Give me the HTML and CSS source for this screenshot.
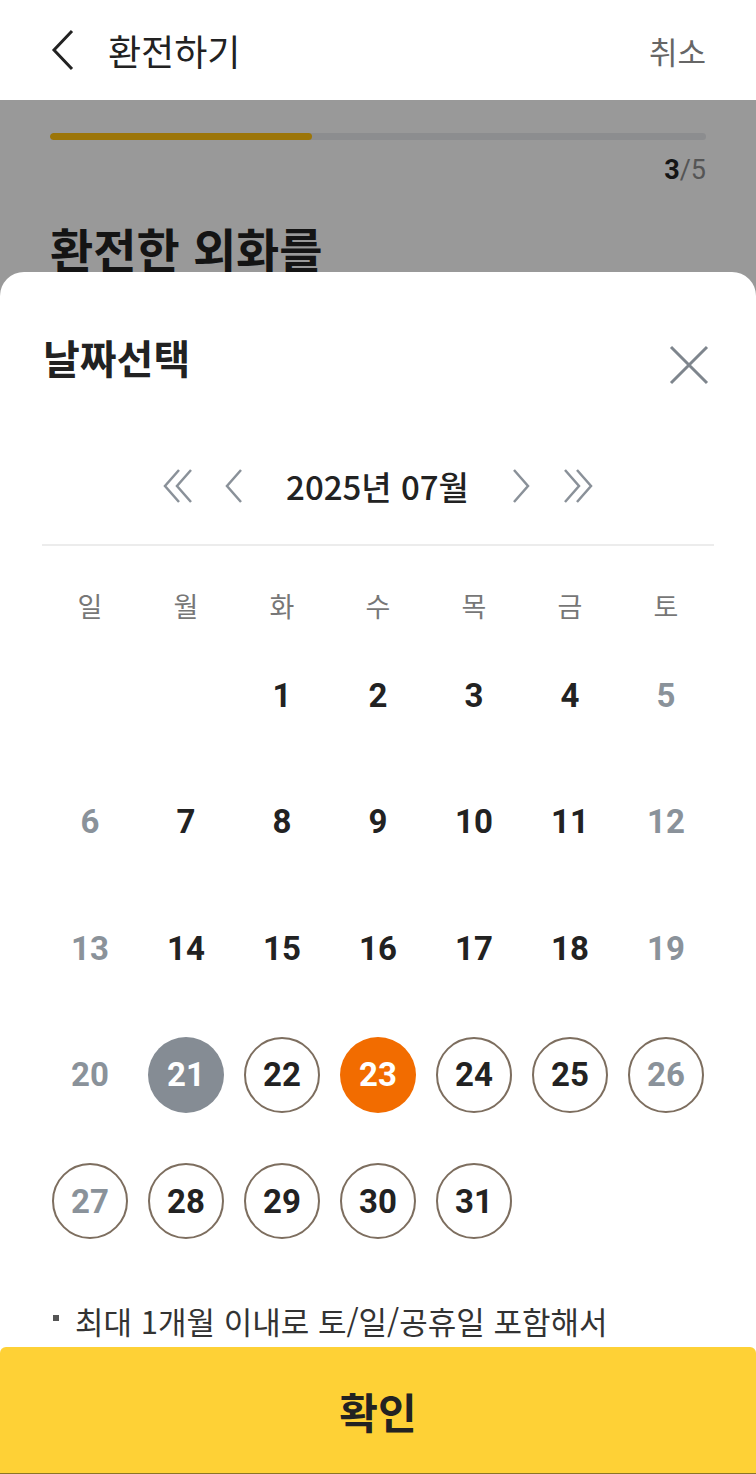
FILE: index.html
```html
<!DOCTYPE html>
<html lang="ko">
<head>
  <meta charset="UTF-8" />
  <title>환전하기 - 날짜선택</title>
  <link rel="stylesheet" href="styles.css">
</head>
<body>
  <div class="screen">
    <header class="topbar">
      <div class="topbar-left">
        <svg class="back" width="26" height="42" viewBox="0 0 26 42">
          <path d="M22 2 L4 21 L22 40" fill="none" stroke="#222" stroke-width="3" />
        </svg>
        <span class="topbar-title">환전하기</span>
      </div>
      <span class="cancel">취소</span>
    </header>

    <main class="step">
      <div class="progress"><div class="progress-fill" style="width: 40%"></div></div>
      <div class="counter"><b>3</b>/5</div>
      <h1 class="step-title">환전한 외화를</h1>
    </main>

    <section class="sheet">
      <div class="sheet-body">
        <div class="sheet-head">
          <h2 class="sheet-title">날짜선택</h2>
          <svg class="close" width="40" height="40" viewBox="0 0 40 40">
            <path d="M2 2 L38 38 M38 2 L2 38" stroke="#7e858d" stroke-width="3" />
          </svg>
        </div>

        <div class="month-nav">
          <svg class="nav-dbl prev-year" width="32" height="36" viewBox="0 0 32 36">
            <path d="M16 2 L2 18 L16 34 M28 2 L14 18 L28 34" fill="none" stroke="#8a9199" stroke-width="2.5" />
          </svg>
          <svg class="nav-one prev-month" width="20" height="36" viewBox="0 0 20 36">
            <path d="M17 2 L3 18 L17 34" fill="none" stroke="#8a9199" stroke-width="2.5" />
          </svg>
          <span class="month-label">2025년 07월</span>
          <svg class="nav-one next-month" width="20" height="36" viewBox="0 0 20 36">
            <path d="M3 2 L17 18 L3 34" fill="none" stroke="#8a9199" stroke-width="2.5" />
          </svg>
          <svg class="nav-dbl next-year" width="32" height="36" viewBox="0 0 32 36">
            <path d="M4 2 L18 18 L4 34 M16 2 L30 18 L16 34" fill="none" stroke="#8a9199" stroke-width="2.5" />
          </svg>
        </div>

        <div class="divider"></div>

        <div class="weekdays">
          <span>일</span><span>월</span><span>화</span><span>수</span><span>목</span><span>금</span><span>토</span>
        </div>

        <div class="days">
          <div class="cell"></div>
          <div class="cell"></div>
          <div class="cell"><span class="day">1</span></div>
          <div class="cell"><span class="day">2</span></div>
          <div class="cell"><span class="day">3</span></div>
          <div class="cell"><span class="day">4</span></div>
          <div class="cell"><span class="day weekend">5</span></div>

          <div class="cell"><span class="day weekend">6</span></div>
          <div class="cell"><span class="day">7</span></div>
          <div class="cell"><span class="day">8</span></div>
          <div class="cell"><span class="day">9</span></div>
          <div class="cell"><span class="day">10</span></div>
          <div class="cell"><span class="day">11</span></div>
          <div class="cell"><span class="day weekend">12</span></div>

          <div class="cell"><span class="day weekend">13</span></div>
          <div class="cell"><span class="day">14</span></div>
          <div class="cell"><span class="day">15</span></div>
          <div class="cell"><span class="day">16</span></div>
          <div class="cell"><span class="day">17</span></div>
          <div class="cell"><span class="day">18</span></div>
          <div class="cell"><span class="day weekend">19</span></div>

          <div class="cell"><span class="day weekend">20</span></div>
          <div class="cell"><span class="day today">21</span></div>
          <div class="cell"><span class="day open">22</span></div>
          <div class="cell"><span class="day selected">23</span></div>
          <div class="cell"><span class="day open">24</span></div>
          <div class="cell"><span class="day open">25</span></div>
          <div class="cell"><span class="day open weekend">26</span></div>

          <div class="cell"><span class="day open weekend">27</span></div>
          <div class="cell"><span class="day open">28</span></div>
          <div class="cell"><span class="day open">29</span></div>
          <div class="cell"><span class="day open">30</span></div>
          <div class="cell"><span class="day open">31</span></div>
        </div>

        <p class="note"><i class="bullet"></i>최대 1개월 이내로 토/일/공휴일 포함해서</p>
      </div>

      <button class="confirm">확인</button>
    </section>
  </div>
</body>
</html>
```

FILE: styles.css
```css
body {
  margin: 0;
  font-family: "Noto Sans CJK KR", "Noto Sans", sans-serif;
  color: #222;
}
.screen {
  position: relative;
  width: 756px;
  height: 1474px;
  overflow: hidden;
  background: #999;
}
.topbar {
  height: 100px;
  background: #fff;
  display: flex;
  align-items: center;
  justify-content: space-between;
  padding: 0 50px 0 50px;
}
.topbar-left {
  display: flex;
  align-items: center;
}
.back {
  margin-right: 32px;
}
.topbar-title {
  font-size: 36px;
  color: #222;
}
.cancel {
  font-size: 31px;
  color: #666;
}
.step {
  padding: 33px 50px 0 50px;
}
.progress {
  height: 7px;
  border-radius: 4px;
  background: #8c8d8f;
  overflow: hidden;
}
.progress-fill {
  height: 100%;
  border-radius: 4px;
  background: #9c7508;
}
.counter {
  margin-top: 14px;
  text-align: right;
  font-family: "Roboto", sans-serif;
  font-size: 27px;
  line-height: 32px;
  color: #555;
}
.counter b {
  color: #151515;
}
.step-title {
  margin: 32px 0 0 0;
  font-size: 47px;
  line-height: 60px;
  font-weight: 700;
  color: #141414;
}
.sheet {
  position: absolute;
  top: 272px;
  left: 0;
  right: 0;
  bottom: 0;
  background: #fff;
  border-radius: 24px 24px 0 0;
  display: flex;
  flex-direction: column;
}
.sheet-body {
  flex: 1;
  overflow: hidden;
  padding: 0 42px;
}
.sheet-head {
  height: 170px;
  display: flex;
  align-items: center;
  justify-content: space-between;
}
.sheet-title {
  margin: 0 0 0 1px;
  font-size: 40px;
  font-weight: 700;
  color: #222;
}
.close {
  margin: 16px 5px 0 0;
}
.month-nav {
  height: 88px;
  display: flex;
  align-items: center;
  justify-content: center;
}
.prev-year { margin-right: 29px; }
.prev-month { margin-right: 42px; }
.next-month { margin-left: 42px; }
.next-year { margin-left: 30px; }
.month-label {
  font-size: 33px;
  font-weight: 500;
  color: #222;
}
.divider {
  margin-top: 14px;
  height: 2px;
  background: #ececec;
}
.weekdays {
  display: grid;
  grid-template-columns: repeat(7, 1fr);
  margin-top: 40px;
  height: 40px;
  line-height: 40px;
  text-align: center;
  font-size: 27px;
  color: #777;
}
.days {
  display: grid;
  grid-template-columns: repeat(7, 1fr);
  grid-auto-rows: 126.5px;
  margin-top: 6px;
}
.cell {
  display: flex;
  align-items: center;
  justify-content: center;
}
.day {
  width: 76px;
  height: 76px;
  box-sizing: border-box;
  border-radius: 50%;
  display: flex;
  align-items: center;
  justify-content: center;
  font-family: "Roboto", sans-serif;
  font-size: 33px;
  font-weight: 700;
  color: #222;
}
.day.weekend {
  color: #8a929a;
}
.day.open {
  border: 2px solid #7d6e5f;
}
.day.today {
  background: #858c94;
  color: #fff;
}
.day.selected {
  background: #f26c00;
  color: #fff;
}
.note {
  margin: 34px 0 0 0;
  padding-left: 11px;
  display: flex;
  align-items: flex-start;
  font-size: 31px;
  line-height: 44px;
  color: #333;
}
.bullet {
  width: 6px;
  height: 6px;
  margin: 16px 16px 0 0;
  background: #555;
  flex: none;
}
.confirm {
  height: 127px;
  border: none;
  border-bottom: 1px solid #8a7626;
  border-radius: 6px 6px 0 0;
  background: #fed136;
  font-family: "Noto Sans CJK KR", sans-serif;
  font-size: 42px;
  font-weight: 700;
  color: #222;
  cursor: pointer;
}
```
